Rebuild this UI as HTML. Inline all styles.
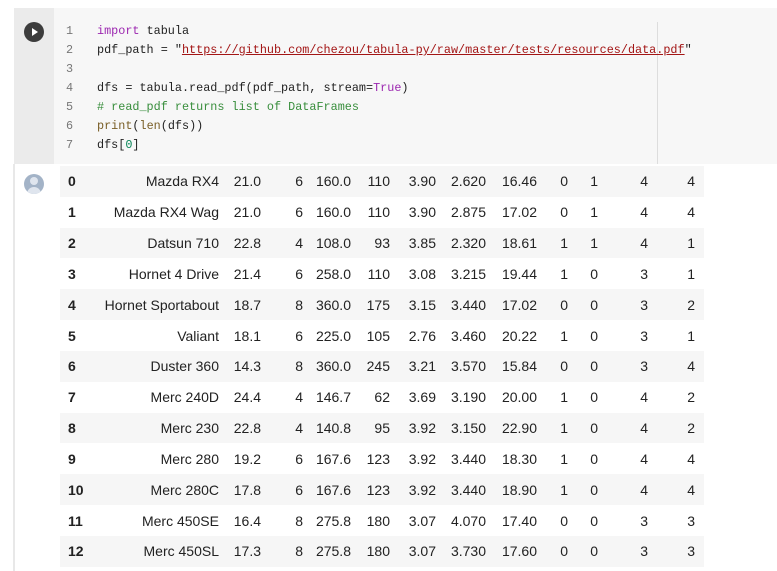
<!DOCTYPE html>
<html><head><meta charset="utf-8"><style>
body{margin:0;width:777px;height:571px;background:#fff;position:relative;overflow:hidden;font-family:"Liberation Sans",sans-serif}
.cell{position:absolute;left:14px;top:8px;width:763px;height:156px;background:#f7f7f7}
.gut{position:absolute;left:14px;top:8px;width:40px;height:156px;background:#ebebeb}
.shadow{position:absolute;left:13px;top:164px;width:2px;height:407px;background:#e8e8e8}
.run{position:absolute;left:24px;top:22px;width:20px;height:20px;border-radius:50%;background:#3c3c3c}
.run:after{content:"";position:absolute;left:8px;top:5.5px;border-left:6px solid #fff;border-top:4.5px solid transparent;border-bottom:4.5px solid transparent}
.vl{position:absolute;left:657px;top:22px;width:1px;height:142px;background:#ddd}
.code{position:absolute;top:22px;font-family:"Liberation Mono",monospace;font-size:11.8px;line-height:19px;color:#222;white-space:pre}
.ln{left:66px;color:#777}.src{left:97px}
.kw{color:#9c27b0}.str{color:#a31515;text-decoration:underline}.cm{color:#388e3c}.fn{color:#795e26}.nm{color:#098658}
.av{position:absolute;left:24px;top:174px;width:20px;height:20px;border-radius:50%;background:#a3b3c7;overflow:hidden}
.av:before{content:"";position:absolute;left:6px;top:3px;width:8px;height:8px;border-radius:50%;background:#dfe5ee}
.av:after{content:"";position:absolute;left:3px;top:13px;width:14px;height:10px;border-radius:7px 7px 0 0;background:#dfe5ee}
table{position:absolute;left:60px;top:166px;border-collapse:collapse;font-size:14px;color:#222}
td{height:30.83px;padding:0;text-align:right}
tr:nth-child(odd){background:#f6f6f6}
td:first-child{text-align:left;padding-left:8px;width:22px;font-weight:bold}
</style></head><body>
<div class="cell"></div><div class="gut"></div><div class="shadow"></div>
<div class="run"></div><div class="vl"></div>
<div class="code ln">1
2
3
4
5
6
7</div>
<div class="code src"><span class="kw">import</span> tabula
pdf_path = "<span class="str">https://github.com/chezou/tabula-py/raw/master/tests/resources/data.pdf</span>"

dfs = tabula.read_pdf(pdf_path, stream=<span class="kw">True</span>)
<span class="cm"># read_pdf returns list of DataFrames</span>
<span class="fn">print</span>(<span class="fn">len</span>(dfs))
dfs[<span class="nm">0</span>]</div>
<div class="av"></div>
<table>
<colgroup><col style="width:30px"><col style="width:129px"><col style="width:42px"><col style="width:42px"><col style="width:48px"><col style="width:39px"><col style="width:46px"><col style="width:50px"><col style="width:51px"><col style="width:31px"><col style="width:30px"><col style="width:50px"><col style="width:56px"></colgroup>
<tr><td>0</td><td>Mazda RX4</td><td>21.0</td><td>6</td><td>160.0</td><td>110</td><td>3.90</td><td>2.620</td><td>16.46</td><td>0</td><td>1</td><td>4</td><td style="padding-right:9px">4</td></tr>
<tr><td>1</td><td>Mazda RX4 Wag</td><td>21.0</td><td>6</td><td>160.0</td><td>110</td><td>3.90</td><td>2.875</td><td>17.02</td><td>0</td><td>1</td><td>4</td><td style="padding-right:9px">4</td></tr>
<tr><td>2</td><td>Datsun 710</td><td>22.8</td><td>4</td><td>108.0</td><td>93</td><td>3.85</td><td>2.320</td><td>18.61</td><td>1</td><td>1</td><td>4</td><td style="padding-right:9px">1</td></tr>
<tr><td>3</td><td>Hornet 4 Drive</td><td>21.4</td><td>6</td><td>258.0</td><td>110</td><td>3.08</td><td>3.215</td><td>19.44</td><td>1</td><td>0</td><td>3</td><td style="padding-right:9px">1</td></tr>
<tr><td>4</td><td>Hornet Sportabout</td><td>18.7</td><td>8</td><td>360.0</td><td>175</td><td>3.15</td><td>3.440</td><td>17.02</td><td>0</td><td>0</td><td>3</td><td style="padding-right:9px">2</td></tr>
<tr><td>5</td><td>Valiant</td><td>18.1</td><td>6</td><td>225.0</td><td>105</td><td>2.76</td><td>3.460</td><td>20.22</td><td>1</td><td>0</td><td>3</td><td style="padding-right:9px">1</td></tr>
<tr><td>6</td><td>Duster 360</td><td>14.3</td><td>8</td><td>360.0</td><td>245</td><td>3.21</td><td>3.570</td><td>15.84</td><td>0</td><td>0</td><td>3</td><td style="padding-right:9px">4</td></tr>
<tr><td>7</td><td>Merc 240D</td><td>24.4</td><td>4</td><td>146.7</td><td>62</td><td>3.69</td><td>3.190</td><td>20.00</td><td>1</td><td>0</td><td>4</td><td style="padding-right:9px">2</td></tr>
<tr><td>8</td><td>Merc 230</td><td>22.8</td><td>4</td><td>140.8</td><td>95</td><td>3.92</td><td>3.150</td><td>22.90</td><td>1</td><td>0</td><td>4</td><td style="padding-right:9px">2</td></tr>
<tr><td>9</td><td>Merc 280</td><td>19.2</td><td>6</td><td>167.6</td><td>123</td><td>3.92</td><td>3.440</td><td>18.30</td><td>1</td><td>0</td><td>4</td><td style="padding-right:9px">4</td></tr>
<tr><td>10</td><td>Merc 280C</td><td>17.8</td><td>6</td><td>167.6</td><td>123</td><td>3.92</td><td>3.440</td><td>18.90</td><td>1</td><td>0</td><td>4</td><td style="padding-right:9px">4</td></tr>
<tr><td>11</td><td>Merc 450SE</td><td>16.4</td><td>8</td><td>275.8</td><td>180</td><td>3.07</td><td>4.070</td><td>17.40</td><td>0</td><td>0</td><td>3</td><td style="padding-right:9px">3</td></tr>
<tr><td>12</td><td>Merc 450SL</td><td>17.3</td><td>8</td><td>275.8</td><td>180</td><td>3.07</td><td>3.730</td><td>17.60</td><td>0</td><td>0</td><td>3</td><td style="padding-right:9px">3</td></tr>
</table>
</body></html>
